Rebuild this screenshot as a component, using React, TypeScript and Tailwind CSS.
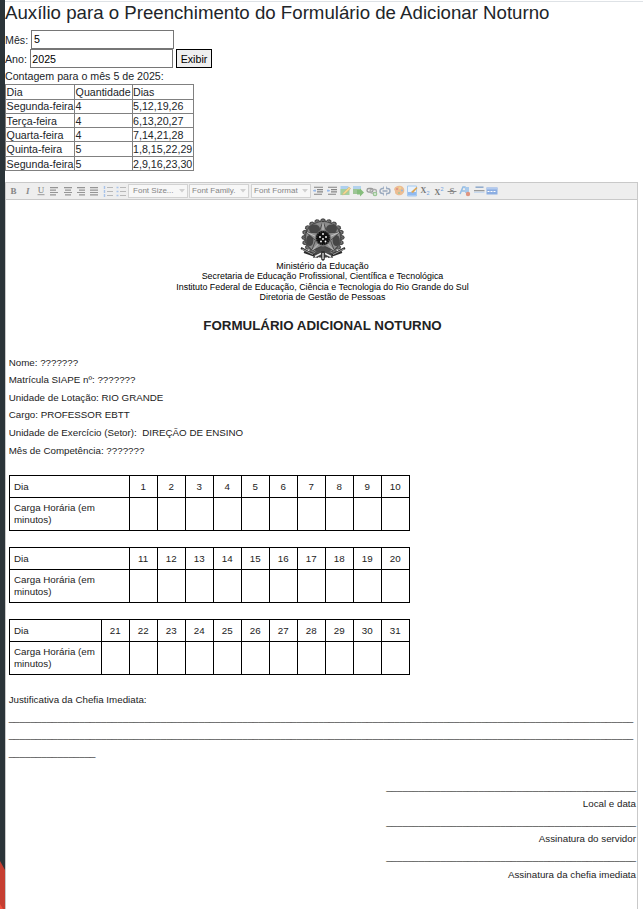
import React from "react";

const counts = [
  ["Dia", "Quantidade", "Dias"],
  ["Segunda-feira", "4", "5,12,19,26"],
  ["Terça-feira", "4", "6,13,20,27"],
  ["Quarta-feira", "4", "7,14,21,28"],
  ["Quinta-feira", "5", "1,8,15,22,29"],
  ["Segunda-feira", "5", "2,9,16,23,30"],
];
const rowHeights = ["h-[15px]", "h-[14px]", "h-[14px]", "h-[14px]", "h-[15px]", "h-[14px]"];

function CountTable() {
  return (
    <table className="w-[189px] table-fixed border-separate border-spacing-0 border-l border-t border-[#808080]">
      <colgroup>
        <col className="w-[69px]" />
        <col className="w-[58px]" />
        <col className="w-[61px]" />
      </colgroup>
      <tbody>
        {counts.map((row, i) => (
          <tr key={i} className={rowHeights[i]}>
            {row.map((c, j) => (
              <td
                key={j}
                className={
                  "overflow-visible whitespace-nowrap border-b border-r border-[#808080] p-0 align-top " +
                  (j === 2 ? "pl-0 " : "pl-[0.6px] ")
                }
              >
                <div className={i === 1 ? "h-[13px] leading-[13px]" : "h-[13px] leading-[15px]"}>{c}</div>
              </td>
            ))}
          </tr>
        ))}
      </tbody>
    </table>
  );
}

function Icon({ children }: { children: React.ReactNode }) {
  return (
    <span className="flex w-[13.35px] shrink-0 justify-center">
      <svg viewBox="0 0 12 12" className="h-3 w-3">{children}</svg>
    </span>
  );
}

function Lines({ d }: { d: string }) {
  return <Icon><path d={d} stroke="#959595" strokeWidth="1.2" fill="none" /></Icon>;
}

function ListIcon({ dots }: { dots?: boolean }) {
  return (
    <Icon>
      <path d="M5 2.5h6M5 6.5h6M5 10.5h6" stroke="#b8b8b8" strokeWidth="1" />
      <path d={dots ? "M1.5 2.5h2M1.5 6.5h2M1.5 10.5h2" : "M2.5 1v3M2.5 5v3M2.5 9v3"} stroke="#a9c4ea" strokeWidth="1.4" />
    </Icon>
  );
}

function IndentIcon({ out }: { out?: boolean }) {
  return (
    <Icon>
      <path d="M2 2.3h9M5 4.6h6M5 6.9h6M2 9.2h8" stroke="#858585" strokeWidth="1.1" />
      <path d={out ? "M1 5.7h3M2 4.6v2.2" : "M1 5.7h3M3 4.6v2.2"} stroke="#8fb4e8" strokeWidth="1.1" />
    </Icon>
  );
}

function Combo({ label, gap }: { label: string; gap: string }) {
  return (
    <span className={"flex h-[14px] shrink-0 items-center justify-between border border-[#d2d2d2] bg-[#f7f7f7] pr-[2px] text-[8px] leading-none text-[#858585] " + gap}>
      <span className="whitespace-nowrap">{label}</span>
      <svg viewBox="0 0 6 4" className="h-[4px] w-[6px]"><path d="M0 0h6L3 3.6z" fill="#d0d0d0" /></svg>
    </span>
  );
}

function Toolbar() {
  return (
    <div className="flex h-[18px] items-center border-b border-t border-[#c9c9c9] bg-[#eeeeee] pl-[1.6px]">
      <Icon><text x="2.4" y="9" fontSize="9" fontWeight="700" fill="#858585" className="font-['Liberation_Serif',serif]">B</text></Icon>
      <Icon><text x="4" y="9" fontSize="9" fontWeight="700" fontStyle="italic" fill="#8a8a8a" className="font-['Liberation_Serif',serif]">I</text></Icon>
      <Icon><text x="2.8" y="8.2" fontSize="9" fill="#777" className="font-['Liberation_Serif',serif]">U</text><path d="M2.5 9.7h7" stroke="#999" /></Icon>
      <Lines d="M2 2.7h8M2 5.1h6M2 7.5h8M2 9.9h6" />
      <Lines d="M2 2.7h8M3 5.1h6M2 7.5h8M3 9.9h6" />
      <Lines d="M2 2.7h8M4 5.1h6M2 7.5h8M4 9.9h6" />
      <Lines d="M2 2.7h8M2 5.1h8M2 7.5h8M2 9.9h8" />
      <ListIcon />
      <ListIcon dots />
      <Combo label="Font Size..." gap="w-[60px] ml-[0.4px] pl-[4px]" />
      <Combo label="Font Family." gap="w-[60px] ml-px pl-[2px]" />
      <Combo label="Font Format" gap="w-[60px] ml-[2px] mr-[0.7px] pl-[2px]" />
      <IndentIcon />
      <IndentIcon out />
      <Icon>
        <path d="M1.5 1h8v9h-8z" fill="#aed0ef" /><path d="M1.5 4h9v6h-9z" fill="#a5d09f" />
        <path d="M4 8l6-6 1.7 1.6L6 9l-2.5 1z" fill="#f3d78f" stroke="#c5b181" strokeWidth=".5" />
      </Icon>
      <Icon>
        <path d="M1 1h8v8H1z" fill="#b2d2ed" /><path d="M1 4h8v5H1z" fill="#9dc595" />
        <path d="M5 5h3V3.5L12 7.5 8 11.5V9.5H5z" fill="#85bd7c" />
      </Icon>
      <Icon>
        <rect x="1" y="3.5" width="6" height="3.6" rx="1.8" fill="none" stroke="#999" strokeWidth="1.3" />
        <rect x="4" y="4.5" width="6.5" height="3.6" rx="1.8" fill="none" stroke="#aaa" strokeWidth="1.3" />
        <circle cx="9" cy="9" r="2.3" fill="#90c08a" /><path d="M7.7 9h2.6M9 7.7v2.6" stroke="#fff" strokeWidth=".7" />
      </Icon>
      <Icon>
        <path d="M5 3.5H3.5a2.5 2.5 0 0 0 0 5H5M7 3.5h1.5a2.5 2.5 0 0 1 0 5H7M3.5 6h5" stroke="#9aa9bd" strokeWidth="1.4" fill="none" />
        <path d="M4.5 1.5v2M7.5 1.5v2M4.5 8.5v2M7.5 8.5v2" stroke="#a5b4ca" />
      </Icon>
      <Icon>
        <path d="M1 4.5c1-5 10-5 10.3.7 0 5-6 6.5-8.5 3.8C1.3 8 3 6.5 1 4.5z" fill="#ecbd92" />
        <circle cx="4" cy="4" r="1" fill="#df8d86" /><circle cx="7" cy="3" r="1" fill="#f2dd8e" /><circle cx="9" cy="5.5" r="1" fill="#94b8dc" /><circle cx="6" cy="8" r="1" fill="#a4c99b" />
      </Icon>
      <Icon>
        <path d="M1.5 1h9v10h-9z" fill="#e8f2fd" stroke="#a6caef" /><path d="M2 7h8v3.5H2z" fill="#91baf0" />
        <path d="M5 7l5.5-5 1 1L7 8z" fill="#dda655" />
      </Icon>
      <Icon><text x="1.5" y="7.7" fontSize="8" fontWeight="700" fill="#777" className="font-['Liberation_Serif',serif]">X</text><text x="7.5" y="10" fontSize="5.5" fill="#6fa1e0">2</text></Icon>
      <Icon><text x="1.5" y="10" fontSize="8" fontWeight="700" fill="#777" className="font-['Liberation_Serif',serif]">X</text><text x="7.5" y="6" fontSize="5.5" fill="#6fa1e0">2</text></Icon>
      <Icon><text x="3.5" y="9.2" fontSize="9" fontWeight="700" fill="#888" className="font-['Liberation_Serif',serif]">S</text><path d="M1.5 6.5h9" stroke="#888" /></Icon>
      <Icon>
        <path d="M1 9l3-7h2l3 7M3 6h4" stroke="#94bde5" strokeWidth="1.6" fill="none" />
        <path d="M6 2h4v6H6z" fill="#a9caec" /><circle cx="9" cy="9" r="2.2" fill="#df9581" />
      </Icon>
      <Icon><path d="M2.5 2.2h8" stroke="#8fa9cb" strokeWidth="1.5" /><path d="M1 5.7h10.5" stroke="#8f8f8f" strokeWidth="1.2" /><path d="M1 7.3h10.5" stroke="#c4d7ef" strokeWidth="1.2" /></Icon>
      <Icon><path d="M.5 2.5h11v7H.5z" fill="#8caee2" /><path d="M.5 2.5h11v2H.5z" fill="#b4cbee" /><path d="M1.5 6.5h9" stroke="#fff" strokeDasharray="2 1" /></Icon>
    </div>
  );
}

const petals = Array.from({ length: 20 }, (_, i) => i * 18);
const starPoints = "23,3 27,15 40,14 30.5,22.5 34.5,33 23,27.5 11.5,33 15.5,22.5 6,14 19,15";

function Emblem() {
  return (
    <svg viewBox="0 0 46 43" className="h-[43px] w-[46px]">
      {petals.map((a) => (
        <g key={a} transform={`translate(23 19.5) scale(1.13 1) rotate(${a})`}>
          <path d="M-3.2-15L-1.8-18.4 0-19.3l1.8.9L3.2-15 3-9h-6z" fill="#4c4c4c" />
          <path d="M-1.6-16.2L0-17.6l1.2 1" stroke="#8a8a8a" strokeWidth=".7" fill="none" />
        </g>
      ))}
      <ellipse cx="23" cy="19.5" rx="17" ry="15.6" fill="#8c8c8c" />
      <ellipse cx="14.5" cy="11" rx="5.5" ry="4.5" fill="#474747" />
      <ellipse cx="31.5" cy="11" rx="5.5" ry="4.5" fill="#474747" />
      <ellipse cx="9.8" cy="22.5" rx="3.6" ry="5.6" fill="#454545" />
      <ellipse cx="36.2" cy="22.5" rx="3.6" ry="5.6" fill="#454545" />
      <ellipse cx="23" cy="32" rx="8" ry="3.4" fill="#4a4a4a" />
      <path d="M1 30l11 6 9 1M45 30l-11 6-9 1M4 34l14 5M42 34l-14 5" stroke="#2c2c2c" strokeWidth="2" fill="none" />
      <path d="M2 31l11 5.5M44 31l-11 5.5" stroke="#c0c0c0" strokeWidth=".8" />
      <path d="M15 35h16l2 5-4-1-6 1-6-1-4 1z" fill="#444" />
      <path d="M15 38.5l6-3M31 38.5l-6-3" stroke="#eee" strokeWidth="1.4" />
      <path d="M21.2 33h3.6v8.5L23 43l-1.8-1.5z" fill="#333" /><path d="M23 35v6" stroke="#eee" strokeWidth="1.2" />
      <polygon points={starPoints} fill="#909090" stroke="#303030" strokeWidth=".7" />
      <path d="M23 4v11M39 14.5L29 19M7 14.5L17 19M34 32.5l-7-7M12 32.5l7-7" stroke="#c8c8c8" strokeWidth=".9" />
      <circle cx="23" cy="20" r="7.6" fill="#101010" stroke="#777" strokeWidth=".8" />
      <circle cx="23" cy="20" r="6.4" fill="none" stroke="#777" strokeWidth=".6" strokeDasharray="1 1.2" />
      {[[23, 16], [20, 19], [26, 19], [23, 21], [21, 23.5], [25.5, 23.5]].map(([x, y], i) => (
        <circle key={i} cx={x} cy={y} r=".9" fill="#fff" />
      ))}
    </svg>
  );
}

function HoursTable({ from, to, narrow }: { from: number; to: number; narrow?: boolean }) {
  const days = Array.from({ length: to - from + 1 }, (_, i) => from + i);
  return (
    <table className="mb-[16px] w-[401px] table-fixed border-separate border-spacing-0 border-l border-t border-black">
      <colgroup>
        <col className={narrow ? "w-[92px]" : "w-[120px]"} />
        {days.map((d) => <col key={d} className="w-[28px]" />)}
      </colgroup>
      <tbody>
        <tr className="h-[22px]">
          <td className="border-b border-r border-black p-0 pl-[4.33px] leading-[12px]">Dia</td>
          {days.map((d) => <td key={d} className="border-b border-r border-black p-0 text-center leading-[12px]">{d}</td>)}
        </tr>
        <tr className="h-[33px]">
          <td className="border-b border-r border-black p-0 pl-[4.33px] leading-[12px]">Carga Horária (em<br />minutos)</td>
          {days.map((d) => <td key={d} className="border-b border-r border-black p-0" />)}
        </tr>
      </tbody>
    </table>
  );
}

const fields = [
  "Nome: ???????",
  "Matrícula SIAPE nº: ???????",
  "Unidade de Lotação: RIO GRANDE",
  "Cargo: PROFESSOR EBTT",
  "Unidade de Exercício (Setor):\u00a0 DIREÇÃO DE ENSINO",
  "Mês de Competência: ???????",
];

function Editor() {
  return (
    <div className="mt-[11px] h-[727px] w-[633px] border-x border-[#c9c9c9] text-[9.78px] text-[#222]">
      <Toolbar />
      <div className="pl-[2.67px]">
        <div className="mr-[0.67px] flex flex-col items-center pt-[18px] text-center text-[8.89px] leading-[10.4px] text-black">
          <Emblem />
          <div>Ministério da Educação</div>
          <div>Secretaria de Educação Profissional, Científica e Tecnológica</div>
          <div>Instituto Federal de Educação, Ciência e Tecnologia do Rio Grande do Sul</div>
          <div>Diretoria de Gestão de Pessoas</div>
          <h2 className="mt-[14px] text-[13.33px] font-bold leading-[18px] text-[#222]">FORMULÁRIO ADICIONAL NOTURNO</h2>
        </div>
        <div className="mb-[16px] mt-[19px] leading-[17.6px]">
          {fields.map((f) => <div key={f}>{f}</div>)}
        </div>
        <HoursTable from={1} to={10} />
        <HoursTable from={11} to={20} />
        <HoursTable from={21} to={31} narrow />
        <div className="leading-[17.6px]">
          <div>Justificativa da Chefia Imediata:</div>
          <div>{"_".repeat(115)}</div>
          <div>{"_".repeat(115)}</div>
          <div>{"_".repeat(16)}</div>
        </div>
        <div className="mt-[16px] pr-px text-right leading-[17.6px]">
          {["Local e data", "Assinatura do servidor", "Assinatura da chefia imediata"].map((s) => (
            <div key={s}>
              <div>{"_".repeat(46)}</div>
              <div>{s}</div>
            </div>
          ))}
        </div>
      </div>
    </div>
  );
}

export default function App() {
  return (
    <div className="flex h-[909px] w-[643px] overflow-hidden bg-white font-['Liberation_Sans',Arial,sans-serif] text-[10.67px] text-[#212529]">
      <div className="flex w-[5px] shrink-0 flex-col justify-end bg-[#2b3439]">
        <svg viewBox="0 0 5 48" className="h-[48px] w-[5px]">
          <path d="M0 0l5 9v39H0z" fill="#c63e31" />
          <path d="M0 43l3 5H0z" fill="#f05340" />
        </svg>
      </div>
      <div className="min-w-0 flex-1 pt-px">
        <div className="h-px bg-[#dee2e6]" />
        <h1 className="h-[28px] whitespace-nowrap text-[18.67px] leading-[22px]">Auxílio para o Preenchimento do Formulário de Adicionar Noturno</h1>
        <div className="flex h-[19px] items-center">
          <label className="w-[26px]">Mês:</label>
          <input defaultValue="5" className="h-[19px] w-[143px] border border-[#767676] bg-white px-[2px] pb-px text-[10.67px] text-black" />
        </div>
        <div className="flex h-[19px] items-center">
          <label className="w-[25px]">Ano:</label>
          <input defaultValue="2025" className="h-[19px] w-[143px] border border-[#767676] bg-white px-[1.33px] text-[10.67px] text-black" />
          <button className="ml-[3px] h-[19px] w-[36px] border border-black bg-[#efefef] p-0 pt-px text-[10.67px] leading-none text-black">Exibir</button>
        </div>
        <div className="h-[16px] leading-[16px]">Contagem para o mês 5 de 2025:</div>
        <CountTable />
        <Editor />
      </div>
    </div>
  );
}
